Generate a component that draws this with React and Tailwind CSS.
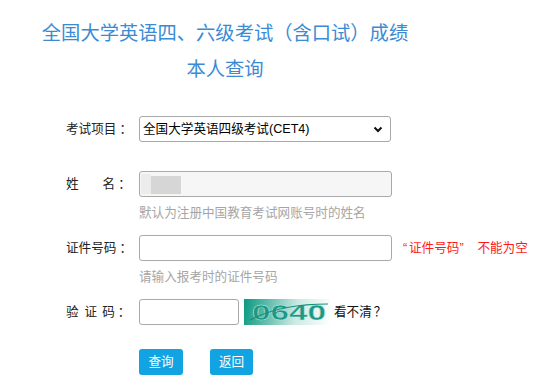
import { useState } from "react"

const font = { fontFamily: '"Liberation Sans", "Noto Sans CJK SC", sans-serif' }

function Label({ children }) {
  return <div className="w-[73px] shrink-0 text-[12.6px] text-[#222]">{children}</div>
}

function Colon() {
  return <span className="ml-[3px]">：</span>
}

function Hint({ children }) {
  return <div className="ml-[73px] mt-[6px] h-[20px] leading-[20px] text-[12.6px] text-[#a6a6a6]">{children}</div>
}

function Captcha() {
  return (
    <div
      className="relative ml-[5px] h-[26px] w-[86px] overflow-hidden"
      style={{ background: 'linear-gradient(100deg, #089a7f 0%, #62bdad 28%, #cbe9e3 60%, #ffffff 100%)' }}
    >
      <svg width="86" height="26" viewBox="0 0 86 26" className="absolute left-0 top-0">
        <text
          x="8" y="21" fontSize="22" fontWeight="bold" fill="#1d9886" stroke="#c9ebe4" strokeWidth="0.4"
          fontFamily="Liberation Sans, sans-serif" textLength="74" lengthAdjust="spacingAndGlyphs"
        >0640</text>
        <path d="M6 21 Q36 5 84 5" stroke="#17907f" strokeWidth="1.2" fill="none" />
      </svg>
    </div>
  )
}

export default function App() {
  const [exam, setExam] = useState('CET4')

  return (
    <div className="h-[390px] w-[536px] bg-white" style={font}>
      {/* Title */}
      <div className="ml-[41px] w-[368px] pt-[14px] text-center text-[19.3px] leading-[36px] text-[#3b8bd4]" style={{ fontFamily: '"Noto Sans CJK SC", sans-serif' }}>
        <p className="whitespace-nowrap">全国大学英语四、六级考试（含口试）成绩</p>
        <p>本人查询</p>
      </div>

      {/* Form */}
      <div className="ml-[66px] mt-[30px]">
        <div className="flex items-center">
          <Label>考试项目<Colon /></Label>
          <div className="relative">
            <select
              value={exam}
              onChange={e => setExam(e.target.value)}
              className="h-[26px] w-[252px] appearance-none rounded-[3px] border border-[#a9a9a9] bg-white pl-[3px] text-[12.6px] text-black outline-none"
              style={font}
            >
              <option value="CET4">全国大学英语四级考试(CET4)</option>
              <option value="CET6">全国大学英语六级考试(CET6)</option>
            </select>
            <svg width="10" height="7" viewBox="0 0 10 7" className="pointer-events-none absolute right-[8px] top-[10px]">
              <path d="M1.5 1.5 L5 5 L8.5 1.5" stroke="#111" strokeWidth="2" fill="none" />
            </svg>
          </div>
        </div>

        <div className="mt-[29px] flex items-center">
          <Label>
            <span>姓</span><span className="ml-[24px]">名</span><Colon />
          </Label>
          <div className="relative h-[26px] w-[253px] rounded-[3px] border border-[#a9a9a9] bg-[#f6f6f6]">
            <div className="absolute left-[1px] top-[2px] h-[20px] w-[10px] bg-[#ececec]" />
            <div className="absolute left-[11px] top-[4px] h-[18px] w-[30px] bg-[#d6d6d6]" />
          </div>
        </div>
        <Hint>默认为注册中国教育考试网账号时的姓名</Hint>

        <div className="mt-[12px] flex items-center">
          <Label>证件号码<Colon /></Label>
          <input className="h-[26px] w-[253px] rounded-[3px] border border-[#a9a9a9] bg-white outline-none" />
          <div className="ml-[11px] flex whitespace-nowrap text-[12.6px] text-[#ff1a1a]">
            <span className="inline-block w-[6px]">“</span>
            <span>证件号码</span>
            <span className="inline-block w-[18px]">”</span>
            <span>不能为空</span>
          </div>
        </div>
        <Hint>请输入报考时的证件号码</Hint>

        <div className="mt-[12px] flex items-center">
          <Label>
            <span>验</span><span className="ml-[6px]">证</span><span className="ml-[5px]">码</span><Colon />
          </Label>
          <input className="h-[26px] w-[100px] rounded-[3px] border border-[#a9a9a9] bg-white outline-none" />
          <Captcha />
          <span className="ml-[4px] text-[12.6px] text-[#111]">看不清<span className="ml-[2px]">？</span></span>
        </div>

        <div className="ml-[73px] mt-[24px] flex gap-[27px]">
          <button className="h-[26px] w-[44px] rounded-[3px] bg-[#12a4e2] text-[12.6px] text-white">查询</button>
          <button className="h-[26px] w-[43px] rounded-[3px] bg-[#12a4e2] text-[12.6px] text-white">返回</button>
        </div>
      </div>
    </div>
  )
}
